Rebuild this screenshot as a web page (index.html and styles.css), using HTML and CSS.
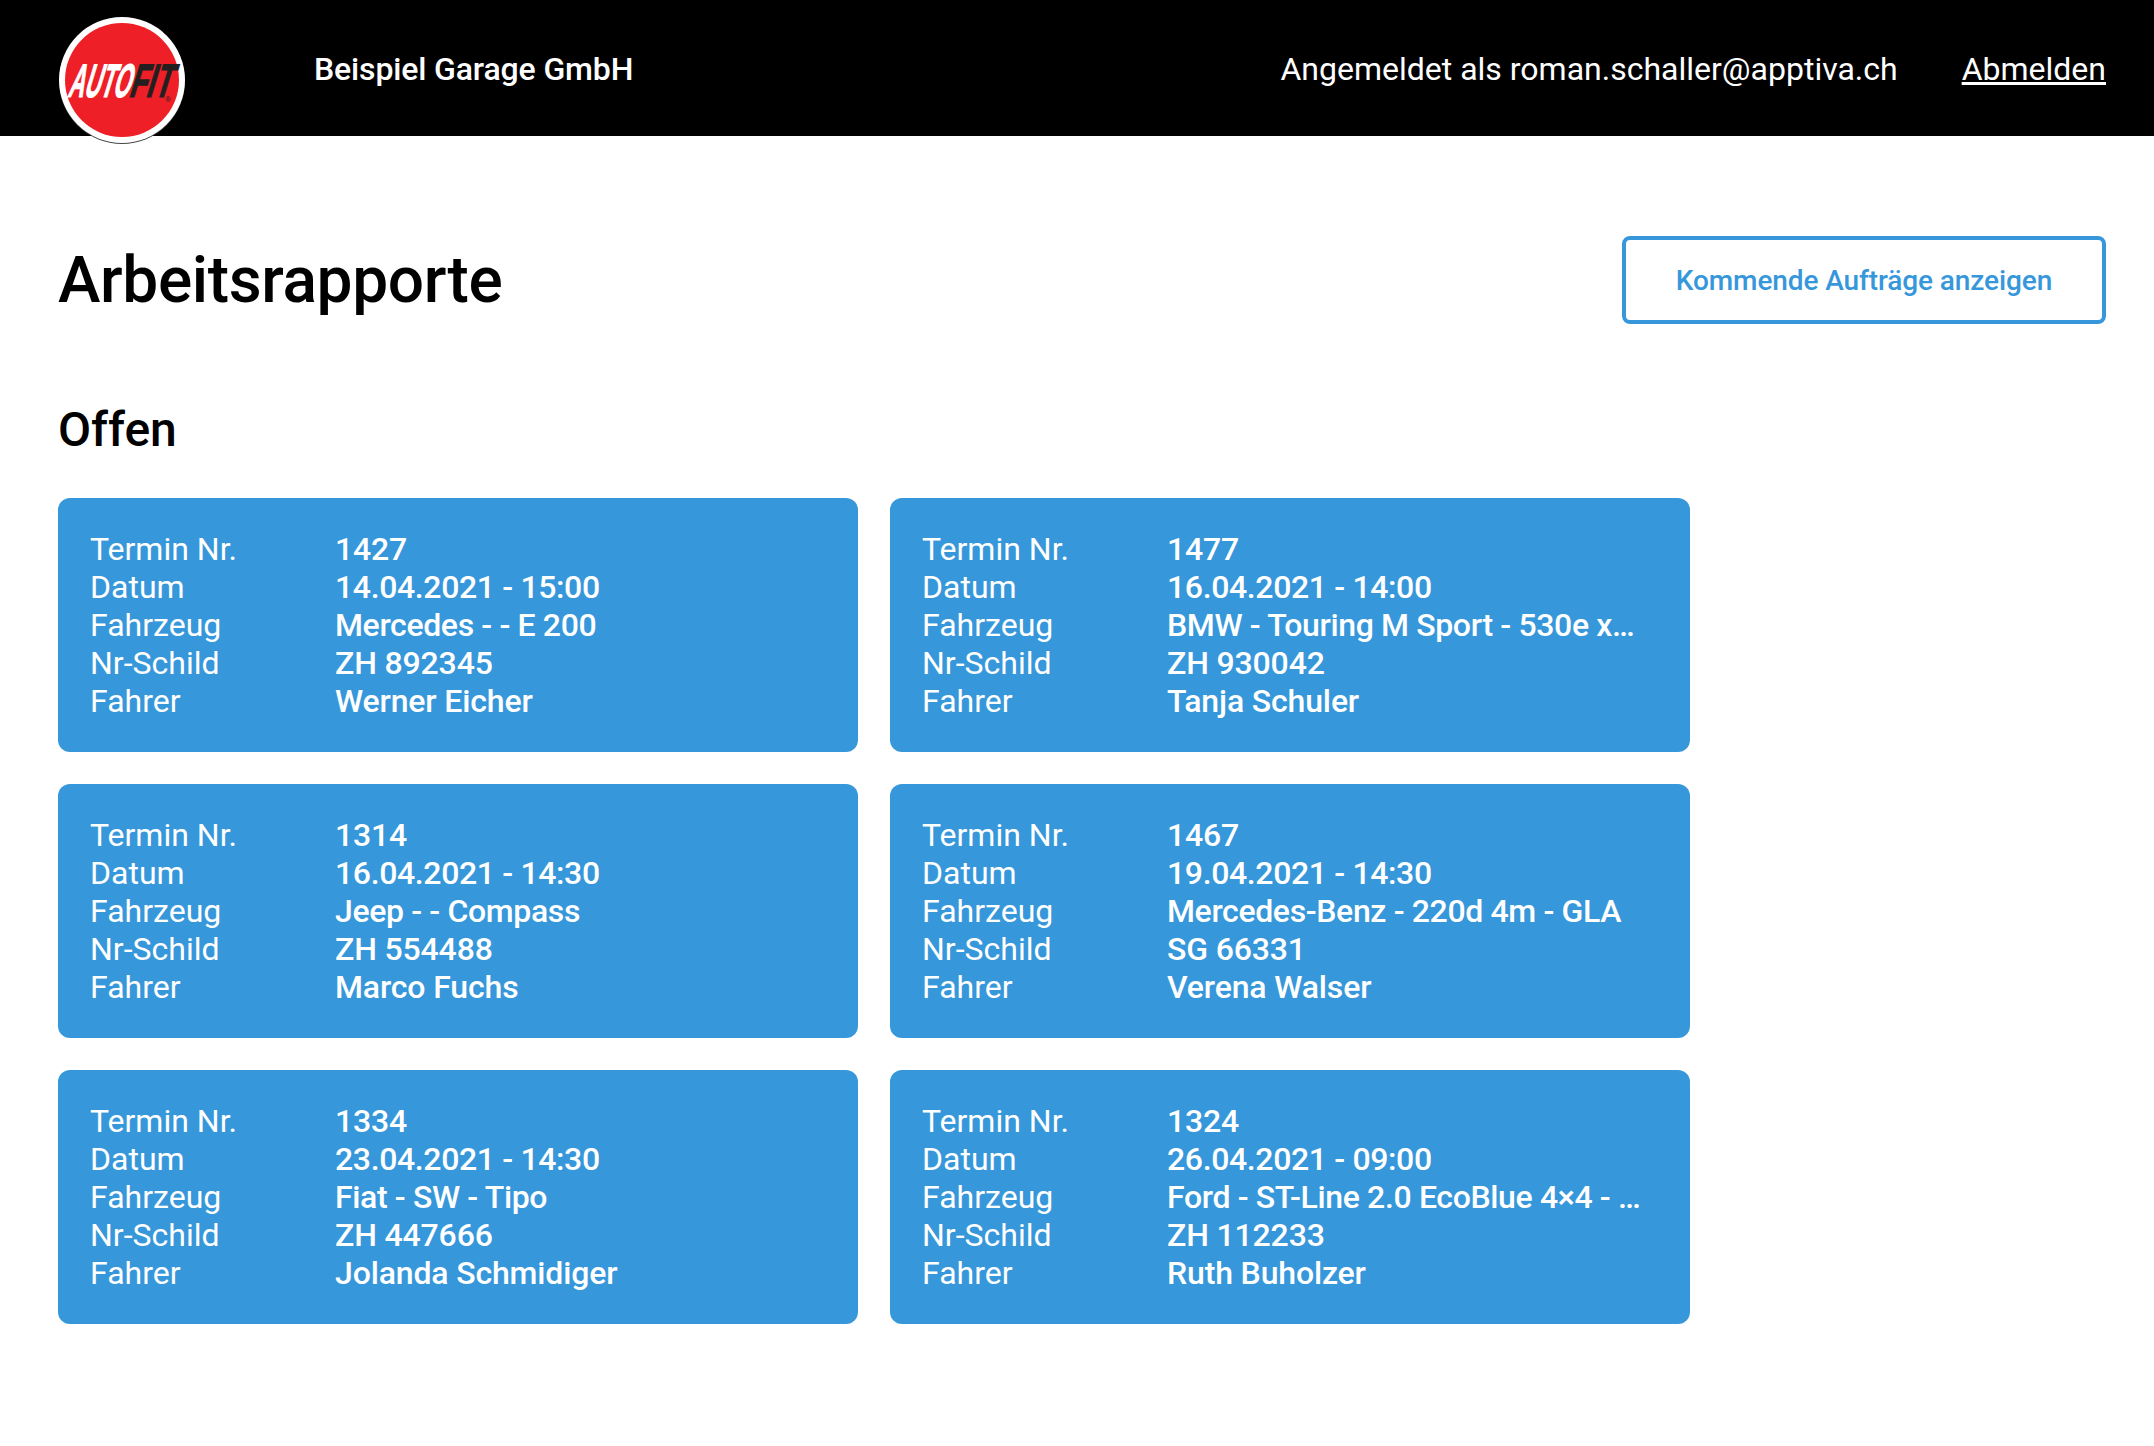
FILE: index.html
```html
<!DOCTYPE html>
<html lang="de">
<head>
  <meta charset="UTF-8" />
  <title>Arbeitsrapporte</title>
  <link rel="stylesheet" href="styles.css">
</head>
<body>

  <!-- Top bar -->
  <header class="topbar">
    <svg class="logo" viewBox="0 0 128 128" aria-label="AutoFit">
      <circle cx="64" cy="64" r="63" fill="#444"/>
      <circle cx="64" cy="63" r="63" fill="#fff"/>
      <circle cx="64" cy="63" r="57" fill="#ee1f26"/>
      <g transform="translate(9 80) skewX(-17)">
        <text class="logo-text logo-auto" x="0" y="0" textLength="62" lengthAdjust="spacingAndGlyphs">AUTO</text>
        <text class="logo-text logo-fit" x="61" y="0" textLength="42" lengthAdjust="spacingAndGlyphs">FIT</text>
      </g>
      <text class="logo-mark" x="107" y="85">®</text>
    </svg>
    <div class="garage">Beispiel Garage GmbH</div>
    <div class="account">Angemeldet als roman.schaller@apptiva.ch</div>
    <a class="logout" href="#">Abmelden</a>
  </header>

  <main class="content">
    <div class="title-row">
      <h1>Arbeitsrapporte</h1>
      <a class="btn-outline" href="#">Kommende Aufträge anzeigen</a>
    </div>

    <h2>Offen</h2>

    <!-- Open reports -->
    <div class="cards">
      <div class="card">
        <span>Termin Nr.</span><strong>1427</strong>
        <span>Datum</span><strong class="tight">14.04.2021 - 15:00</strong>
        <span>Fahrzeug</span><strong class="tight">Mercedes - - E 200</strong>
        <span>Nr-Schild</span><strong>ZH 892345</strong>
        <span>Fahrer</span><strong>Werner Eicher</strong>
      </div>
      <div class="card">
        <span>Termin Nr.</span><strong>1477</strong>
        <span>Datum</span><strong class="tight">16.04.2021 - 14:00</strong>
        <span>Fahrzeug</span><strong class="tight">BMW - Touring M Sport - 530e xDrive</strong>
        <span>Nr-Schild</span><strong>ZH 930042</strong>
        <span>Fahrer</span><strong>Tanja Schuler</strong>
      </div>
      <div class="card">
        <span>Termin Nr.</span><strong>1314</strong>
        <span>Datum</span><strong class="tight">16.04.2021 - 14:30</strong>
        <span>Fahrzeug</span><strong class="tight">Jeep - - Compass</strong>
        <span>Nr-Schild</span><strong>ZH 554488</strong>
        <span>Fahrer</span><strong>Marco Fuchs</strong>
      </div>
      <div class="card">
        <span>Termin Nr.</span><strong>1467</strong>
        <span>Datum</span><strong class="tight">19.04.2021 - 14:30</strong>
        <span>Fahrzeug</span><strong class="tight">Mercedes-Benz - 220d 4m - GLA</strong>
        <span>Nr-Schild</span><strong>SG 66331</strong>
        <span>Fahrer</span><strong>Verena Walser</strong>
      </div>
      <div class="card">
        <span>Termin Nr.</span><strong>1334</strong>
        <span>Datum</span><strong class="tight">23.04.2021 - 14:30</strong>
        <span>Fahrzeug</span><strong class="tight">Fiat - SW - Tipo</strong>
        <span>Nr-Schild</span><strong>ZH 447666</strong>
        <span>Fahrer</span><strong>Jolanda Schmidiger</strong>
      </div>
      <div class="card">
        <span>Termin Nr.</span><strong>1324</strong>
        <span>Datum</span><strong class="tight">26.04.2021 - 09:00</strong>
        <span>Fahrzeug</span><strong class="tight">Ford - ST-Line 2.0 EcoBlue 4×4 - Kuga</strong>
        <span>Nr-Schild</span><strong>ZH 112233</strong>
        <span>Fahrer</span><strong>Ruth Buholzer</strong>
      </div>
    </div>
  </main>

</body>
</html>
```

FILE: styles.css
```css
body {
  margin: 0;
  background: #fff;
  color: #000;
  font-family: Roboto, "Liberation Sans", sans-serif;
}

/* Black bar at the top, logo hangs over its lower edge */
.topbar {
  display: flex;
  align-items: center;
  height: 136px;
  padding: 2px 48px 0 58px;
  box-sizing: border-box;
  background: #000;
  color: #fff;
  font-size: 32px;
}

.logo {
  flex: none;
  width: 128px;
  height: 128px;
  margin: 24px 0 0 0;
  overflow: visible;
}

.logo-text {
  font-family: "Liberation Sans", sans-serif;
  font-size: 47px;
  font-weight: 700;
  stroke-width: 1.2px;
}

.logo-auto {
  fill: #fff;
  stroke: #fff;
}

.logo-fit {
  fill: #231f20;
  stroke: #231f20;
}

.logo-mark {
  font-family: "Liberation Sans", sans-serif;
  font-size: 8px;
  fill: #231f20;
}

.garage {
  margin-left: 128px;
  font-weight: 500;
  letter-spacing: -0.14px;
}

.account {
  margin-left: auto;
}

.logout {
  margin-left: 64px;
  color: #fff;
}

.content {
  padding: 0 48px 0 58px;
}

.title-row {
  display: flex;
  justify-content: space-between;
  align-items: center;
  margin-top: 100px;
}

h1 {
  margin: 0;
  font-size: 64px;
  font-weight: 500;
  letter-spacing: -0.36px;
}

/* Outlined button right of the title */
.btn-outline {
  box-sizing: border-box;
  width: 484px;
  height: 88px;
  line-height: 82px;
  border: 4px solid #3797db;
  border-radius: 8px;
  color: #3797db;
  font-size: 28px;
  font-weight: 500;
  letter-spacing: -0.1px;
  text-align: center;
  text-decoration: none;
}

h2 {
  margin: 78px 0 0 0;
  font-size: 48px;
  line-height: 56px;
  font-weight: 500;
}

.cards {
  display: grid;
  grid-template-columns: 800px 800px;
  gap: 32px;
  margin-top: 40px;
}

.card {
  display: grid;
  grid-template-columns: 245px minmax(0, 1fr);
  box-sizing: border-box;
  height: 254px;
  padding: 32px 40px 32px 32px;
  background: #3797db;
  border-radius: 12px;
  color: #fff;
  font-size: 32px;
  line-height: 38px;
}

.card strong {
  font-weight: 500;
  letter-spacing: -0.15px;
  white-space: nowrap;
  overflow: hidden;
  text-overflow: ellipsis;
}

.card .tight {
  letter-spacing: -0.36px;
}

.card span {
  font-weight: 400;
}
```
